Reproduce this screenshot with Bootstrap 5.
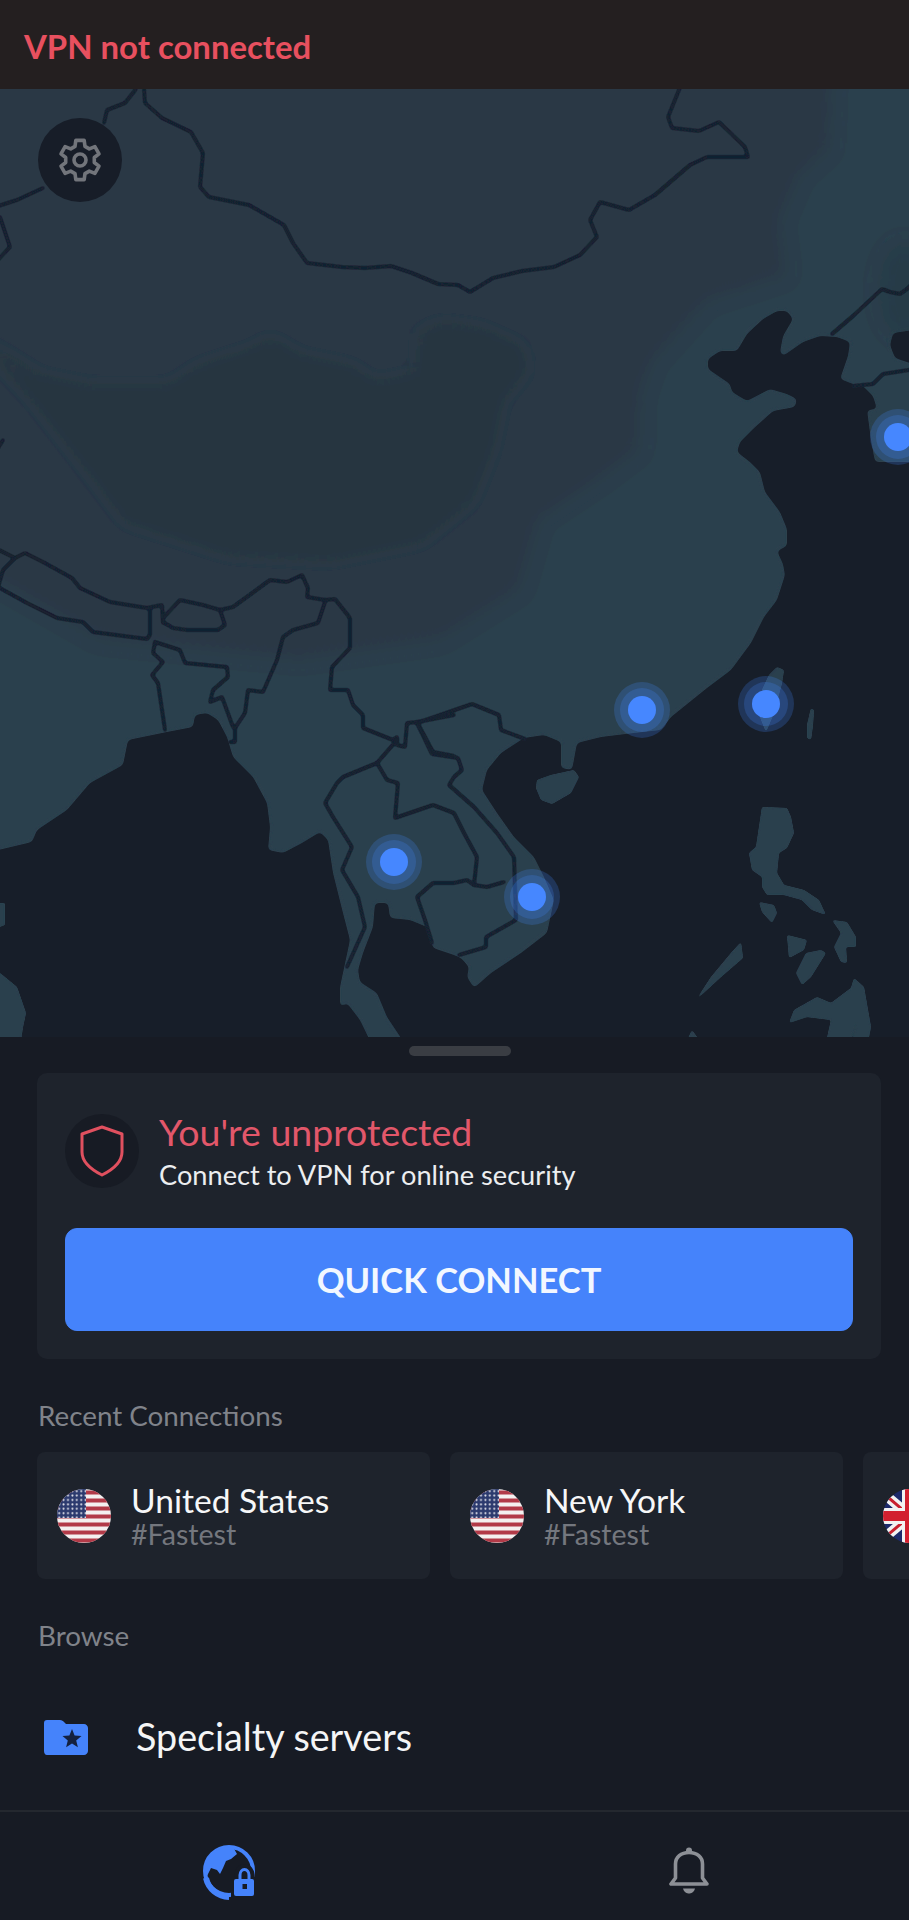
<!DOCTYPE html>
<html lang="en">

<head>
    <meta charset="UTF-8">
    <meta name="viewport" content="width=device-width, initial-scale=1.0">
    <title>VPN</title>
    <link href="https://cdn.jsdelivr.net/npm/bootstrap@5.3.0/dist/css/bootstrap.min.css" rel="stylesheet">
    <style>
        body { background: #171b24; font-family: Lato, "Liberation Sans", sans-serif; height: 1920px; overflow: hidden; color: #f2f3f5; }
        .status-bar { height: 89px; background: #241f20; color: #e8505f; font-size: 32.9px; font-weight: 700; padding-left: 24px; padding-top: 5px; }
        .map-area { height: 948px; background: #171e29; }
        .map-area svg { display: block; }
        .settings-btn { top: 29px; left: 38px; width: 84px; height: 84px; background: #171d28; border: 0; }
        .sheet-handle { width: 102px; height: 10px; background: #3a3d43; margin: 9px 0 17px 409px; }
        .status-card { --bs-card-bg: #1e232c; --bs-card-border-width: 0; --bs-card-border-radius: 10px; margin: 0 28px 0 37px; padding: 37.5px 28px 28px; }
        .shield-wrap { width: 74px; height: 74px; background: #171b24; flex-shrink: 0; margin-right: 20px; }
        .status-title { font-size: 37.5px; line-height: 42px; color: #e2576a; }
        .status-sub { font-size: 27.2px; line-height: 34px; margin-top: 5.5px; color: #eceef0; }
        .quick-btn { --bs-btn-bg: #4583fb; --bs-btn-border-color: #4583fb; --bs-btn-border-radius: 12px; height: 103px; margin-top: 36px; font-size: 34.5px; font-weight: 700; color: #f2f7ff; }
        .section-label { color: #80838a; font-size: 27.8px; line-height: 32px; margin: 41px 0 0 38px; }
        .recent-row { margin: 20px 0 0 37px; gap: 20px; }
        .recent-item { width: 393px; height: 127px; flex-shrink: 0; background: #1e232c; border-radius: 8px; padding-left: 20px; }
        .recent-item svg { flex-shrink: 0; margin-right: 20px; }
        .recent-name { font-size: 33.6px; line-height: 36px; color: #f6f7f8; }
        .recent-tag { font-size: 28.6px; line-height: 32px; color: #74777e; }
        .browse-row { height: 146px; margin-top: 12px; padding-left: 44px; }
        .browse-row span { font-size: 37.7px; margin-left: 48px; color: #f4f5f6; }
        .bottom-nav { height: 108px; border-top: 2px solid #24282f; padding-top: 11px; }
        .nav-slot { width: 459px; flex-shrink: 0; }
    </style>
</head>

<body>
    <div class="status-bar d-flex align-items-center">VPN not connected</div>

    <div class="map-area position-relative">
        <svg width="909" height="948" viewBox="0 89 909 948">
            <defs>
                <filter id="soft" filterUnits="userSpaceOnUse" x="-50" y="30" width="1010" height="1060"><feGaussianBlur stdDeviation="8"/></filter>
                <filter id="roundCoast" filterUnits="userSpaceOnUse" x="-50" y="30" width="1010" height="1060">
                    <feGaussianBlur stdDeviation="2.2"/>
                    <feComponentTransfer><feFuncA type="linear" slope="7" intercept="-3"/></feComponentTransfer>
                </filter>
                <filter id="roundIsle" filterUnits="userSpaceOnUse" x="-50" y="30" width="1010" height="1060">
                    <feGaussianBlur stdDeviation="1"/>
                    <feComponentTransfer><feFuncA type="linear" slope="5" intercept="-1.7"/></feComponentTransfer>
                </filter>
                <filter id="roundLine" filterUnits="userSpaceOnUse" x="-50" y="30" width="1010" height="1060">
                    <feGaussianBlur stdDeviation="1"/>
                    <feComponentTransfer><feFuncA type="linear" slope="3" intercept="-.45"/></feComponentTransfer>
                </filter>
                <clipPath id="landClip">
                    <path id="landShape" d="M-10 79H919V329L893 333 890 345 895 358 919 366V462H875L871 440 867 410 877 409 873 396 863 386 853 384 840 379 848 356 850 342 837 337 820 336 803 342 783 356 780 352 783 336 793 319 787 311 777 311 763 319 747 334 737 351 720 351 708 359 708 369 730 384 732 392 747 401 770 389 787 394 797 399 795 407 773 411 753 429 740 442 737 452 750 462 760 472 765 492 780 512 787 529 787 546 777 551 783 564 785 575 777 600 764 617 751 643 731 670 707 688 671 717 661 730 634 733 601 737 577 743 572 770 561 768 561 742 544 735 524 738 501 753 487 770 482 790 497 813 514 837 534 857 544 877 554 900 547 933 521 953 491 973 474 988 467 977 469 967 461 958 454 955 433 948 427 927 410 920 390 918 388 903 375 903 373 927 363 953 358 970 360 982 377 993 387 1017 407 1047H373L360 1020 347 1003 340 1007 340 987 350 940 343 913 333 873 328 840 320 832 302 843 283 853 268 850 270 827 267 803 253 777 233 757 227 737 218 720 207 713 195 715 193 727 167 732 128 740 123 765 90 783 67 810 37 830 32 842-10 852Z"/>
                </clipPath>
            </defs>

            <!-- land -->
            <g filter="url(#roundCoast)">
                <use href="#landShape" fill="#2b3f4d"/>
                <g clip-path="url(#landClip)">
                    <path filter="url(#soft)" fill="#2a3845" d="M-40 60H833L830 149 800 176 780 222 787 276 707 302 653 362 640 400 640 450 600 480 540 520 520 590 440 640 300 660 100 640-40 560Z"/>
                    <path filter="url(#soft)" fill="#25353f" d="M-20 340L40 378 90 388 170 388 200 368 255 350 270 340 300 358 350 368 375 385 420 375 420 335 440 325 480 330 520 348 525 370 500 400 490 450 470 500 420 540 330 558 230 553 127 520 87 467 35 400Z"/>
                    <ellipse cx="905" cy="290" rx="26" ry="48" fill="#283a46" filter="url(#soft)"/>
                </g>
            </g>

            <!-- islands -->
            <g fill="#2b3f4d" filter="url(#roundIsle)">
                <path d="M-10 973H0L17 987 26 1013 23 1027 20 1047H-10Z"/>
                <path d="M-10 903H5L5 925-10 930Z"/>
                <path d="M537 780L551 775 574 770 579 777 571 793 552 804 541 800 536 788Z"/>
                <path d="M777 667L784 670 782 683 774 713 766 732 760 717 762 690 769 675Z"/>
                <path d="M811 708L814 710 813 725 811 740 807 738 807 725Z"/>
                <path d="M762 807L787 808 791 817 794 833 787 848 779 853 777 873 784 885 804 890 819 900 826 915 812 910 802 900 784 895 767 895 762 887 762 877 752 870 749 853 756 847 759 827Z"/>
                <path d="M759 902L774 905 777 913 772 923 762 912Z"/>
                <path d="M741 942L743 958 721 977 696 1000 711 977 731 953Z"/>
                <path d="M832 920L847 922 856 937 856 947 846 947 847 963 841 962 834 947 841 933Z"/>
                <path d="M787 935L807 940 804 950 789 958Z"/>
                <path d="M821 950L826 953 811 977 802 985 796 973 806 953Z"/>
                <path d="M854 978L864 987 871 1027 867 1047H851L857 1022 848 1047H825L831 1020 807 1017 789 1023 794 1010 817 997 831 1003 851 988Z"/>
                <path d="M684 1047L692 1030 704 1047Z"/>
            </g>

            <!-- borders -->
            <g fill="none" stroke="#182330" stroke-width="3" stroke-linejoin="round" stroke-linecap="round" filter="url(#roundLine)">
                <path d="M136 89L125 103 107 110 104 123"/>
                <path d="M43 188L17 200-5 207"/>
                <path d="M144 89L145 103 162 118 191 132 203 153 200 187 209 197 249 205 284 225 293 243 307 263 342 267 365 268 391 266 412 273 438 284 458 285 470 292 493 278 522 271 554 267 580 255 597 237 590 220 600 202 629 210 655 195 690 165 707 157 748 157 745 147 719 122 699 131 672 128 668 117 681 85"/>
                <path d="M-5 217L0 217 10 247-5 263"/>
                <path d="M3 440L-5 453"/>
                <path d="M832 334L853 316 882 289 890 292 900 294 907 289 915 281"/>
                <path d="M915 369L883 374 873 384 853 386"/>
                <path d="M-5 548L15 558 25 553 43 562 72 578 80 588 110 602 147 608 162 605 163 623"/>
                <path d="M15 558L3 570-2 587 27 603 57 618 83 622 93 632 147 639 150 635 150 608"/>
                <path d="M163 618L180 600 203 605 220 610 225 625 218 630 187 630 173 628 163 622"/>
                <path d="M220 610L233 607 270 580 287 582 302 575 308 588 307 597 325 600 335 599 350 618 350 648 332 667 330 690 348 690 353 705 363 715 363 728 393 740 397 737 397 745 405 747 407 723 417 722 454 715"/>
                <path d="M325 602L318 623 293 630 283 637 277 660 263 692 248 690 245 713 235 728 235 742 230 742"/>
                <path d="M155 642L180 650 185 663 227 667 228 677 213 690 210 702 222 697 233 727"/>
                <path d="M155 642L153 653 163 662 152 675 158 683 165 730"/>
                <path d="M397 740L377 763 343 777 337 783 325 803 333 817 352 847 342 870 358 897 365 927 347 967"/>
                <path d="M377 763L387 780 398 783 395 818 433 805 454 813 464 833 477 857 474 885 487 887 504 882"/>
                <path d="M417 722L433 752 454 756"/>
                <path d="M417 723L472 704 499 715 501 730 525 739"/>
                <path d="M417 723L432 754 458 758 462 770 454 777 449 785 474 807 497 833 514 857 516 920 486 937 486 947 459 955"/>
                <path d="M474 885L467 880 454 883 433 883 417 897 425 920 432 943"/>
            </g>

            <!-- servers -->
            <g>
                <circle cx="394" cy="862" r="28" fill="#4687ff" fill-opacity=".22"/>
                <circle cx="394" cy="862" r="22" fill="#4687ff" fill-opacity=".22"/>
                <circle cx="394" cy="862" r="14" fill="#4687ff"/>
                <circle cx="532" cy="897" r="28" fill="#4687ff" fill-opacity=".22"/>
                <circle cx="532" cy="897" r="22" fill="#4687ff" fill-opacity=".22"/>
                <circle cx="532" cy="897" r="14" fill="#4687ff"/>
                <circle cx="642" cy="710" r="28" fill="#4687ff" fill-opacity=".22"/>
                <circle cx="642" cy="710" r="22" fill="#4687ff" fill-opacity=".22"/>
                <circle cx="642" cy="710" r="14" fill="#4687ff"/>
                <circle cx="766" cy="704" r="28" fill="#4687ff" fill-opacity=".22"/>
                <circle cx="766" cy="704" r="22" fill="#4687ff" fill-opacity=".22"/>
                <circle cx="766" cy="704" r="14" fill="#4687ff"/>
                <circle cx="898" cy="437" r="28" fill="#4687ff" fill-opacity=".22"/>
                <circle cx="898" cy="437" r="22" fill="#4687ff" fill-opacity=".22"/>
                <circle cx="898" cy="437" r="14" fill="#4687ff"/>
            </g>
        </svg>

        <button class="settings-btn btn rounded-circle position-absolute p-0 d-flex align-items-center justify-content-center" aria-label="Settings">
            <svg width="46" height="48" viewBox="-23 -24 46 48" fill="none" stroke="#72757b" stroke-width="3.6" stroke-linejoin="round">
                <path d="M-4.2-19.6L4.2-19.6 5-13.6 9.3-11.1 14.9-13.4 19-6.2 14.3-2.5 14.3 2.5 19 6.2 14.9 13.4 9.3 11.1 5 13.6 4.2 19.6-4.2 19.6-5 13.6-9.3 11.1-14.9 13.4-19 6.2-14.3 2.5-14.3-2.5-19-6.2-14.9-13.4-9.3-11.1-5-13.6Z"/>
                <circle r="6"/>
            </svg>
        </button>
    </div>

    <div class="sheet">
        <div class="sheet-handle rounded-pill"></div>

        <div class="status-card card">
            <div class="d-flex align-items-center">
                <div class="shield-wrap rounded-circle d-flex align-items-center justify-content-center">
                    <svg width="44" height="52" viewBox="0 0 44 52" fill="none" stroke="#e0505f" stroke-width="3" stroke-linejoin="round">
                        <path d="M22 2L42 9V27C42 37 32 45 22 50 12 45 2 37 2 27V9Z"/>
                    </svg>
                </div>
                <div>
                    <div class="status-title">You're unprotected</div>
                    <div class="status-sub">Connect to VPN for online security</div>
                </div>
            </div>
            <button class="quick-btn btn btn-primary w-100">QUICK CONNECT</button>
        </div>

        <div class="section-label">Recent Connections</div>
        <div class="recent-row d-flex overflow-hidden">
            <div class="recent-item d-flex align-items-center">
                <svg width="54" height="54" viewBox="0 0 54 54">
                    <use href="#usFlag"/>
                </svg>
                <div>
                    <div class="recent-name">United States</div>
                    <div class="recent-tag">#Fastest</div>
                </div>
            </div>
            <div class="recent-item d-flex align-items-center">
                <svg width="54" height="54" viewBox="0 0 54 54">
                    <use href="#usFlag"/>
                </svg>
                <div>
                    <div class="recent-name">New York</div>
                    <div class="recent-tag">#Fastest</div>
                </div>
            </div>
            <div class="recent-item d-flex align-items-center">
                <svg width="54" height="54" viewBox="0 0 54 54">
                    <clipPath id="ukClip"><circle cx="27" cy="27" r="27"/></clipPath>
                    <g clip-path="url(#ukClip)">
                        <rect width="54" height="54" fill="#1d2a6b"/>
                        <path d="M0 4L54 50M54 4L0 50" stroke="#f2f2f2" stroke-width="10"/>
                        <path d="M0 4L54 50M54 4L0 50" stroke="#c8202f" stroke-width="3"/>
                        <path d="M27 0V54M0 27H54" stroke="#f2f2f2" stroke-width="16"/>
                        <path d="M27 0V54M0 27H54" stroke="#d2202f" stroke-width="10"/>
                    </g>
                </svg>
            </div>
        </div>

        <div class="section-label">Browse</div>
        <div class="browse-row d-flex align-items-center">
            <svg width="44" height="35" viewBox="0 0 44 35">
                <path d="M3 0H16C18 0 19 1 20 2L22 4H40C42 4 44 6 44 8V31C44 33 42 35 40 35H3C1 35 0 33 0 31V3C0 1 1 0 3 0Z" fill="#4583fb"/>
                <path d="M28 9L30.600 15.600 37.500 16.100 32.200 20.500 33.900 27.200 28 23.500 22.100 27.200 23.800 20.500 18.500 16.100 25.400 15.600Z" fill="#14213f"/>
            </svg>
            <span>Specialty servers</span>
        </div>

        <nav class="bottom-nav d-flex">
            <div class="nav-slot d-flex align-items-center justify-content-center">
                <svg width="80" height="80" viewBox="0 0 80 80">
                    <circle cx="39" cy="40" r="24" fill="none" stroke="#4583fb" stroke-width="4"/>
                    <path d="M39 16A24 24 0 0 0 16 47L21 37 27 39 30 43 33 37 36 30 41 28 47 23 43 16Z" fill="#4583fb"/>
                    <path d="M16 47A24 24 0 0 0 39 66" fill="none" stroke="#4583fb" stroke-width="6"/>
                    <path d="M49 52V44A5.500 6.500 0 0 1 60 44V52" fill="none" stroke="#171b24" stroke-width="9"/>
                    <rect x="41" y="46" width="26" height="23" fill="#171b24"/>
                    <path d="M50 48V44A4.500 5.500 0 0 1 59 44V48" fill="none" stroke="#4583fb" stroke-width="3"/>
                    <rect x="44" y="48" width="20" height="17" rx="2" fill="#4583fb"/>
                    <rect x="52.500" y="53" width="4.500" height="5" fill="#171b24"/>
                </svg>
            </div>
            <div class="nav-slot d-flex align-items-center justify-content-center">
                <svg width="40" height="48" viewBox="0 0 40 48" fill="none" stroke="#8d9096" stroke-width="3.6" stroke-linejoin="round">
                    <path d="M2 37H38L33.500 31V17C33.500 10 28 5.500 20 5.500S6.500 10 6.500 17V31Z"/>
                    <circle cx="20" cy="3.500" r="3" fill="#8d9096" stroke="none"/>
                    <path d="M14 41.500H26C25 45.500 22 46.500 20 46.500S15 45.500 14 41.500Z" fill="#8d9096" stroke="none"/>
                </svg>
            </div>
        </nav>
    </div>

    <!-- flag shared by the two recent connections -->
    <svg width="0" height="0" class="position-absolute">
        <defs>
            <clipPath id="usClip"><circle cx="27" cy="27" r="27"/></clipPath>
            <pattern id="usStars" width="4.400" height="4.400" patternUnits="userSpaceOnUse">
                <circle cx="2.200" cy="2.200" r="1" fill="#e8e8ee"/>
            </pattern>
            <g id="usFlag" clip-path="url(#usClip)">
                <rect width="54" height="54" fill="#f4f0f0"/>
                <path d="M0 3.500H54M0 11.500H54M0 19.500H54M0 27.500H54M0 35.500H54M0 43.500H54M0 51.500H54" stroke="#b23a48" stroke-width="4"/>
                <rect width="29" height="29" fill="#2c3a6e"/>
                <rect width="29" height="29" fill="url(#usStars)"/>
            </g>
        </defs>
    </svg>

    <script src="https://cdn.jsdelivr.net/npm/bootstrap@5.3.0/dist/js/bootstrap.bundle.min.js"></script>
</body>

</html>
